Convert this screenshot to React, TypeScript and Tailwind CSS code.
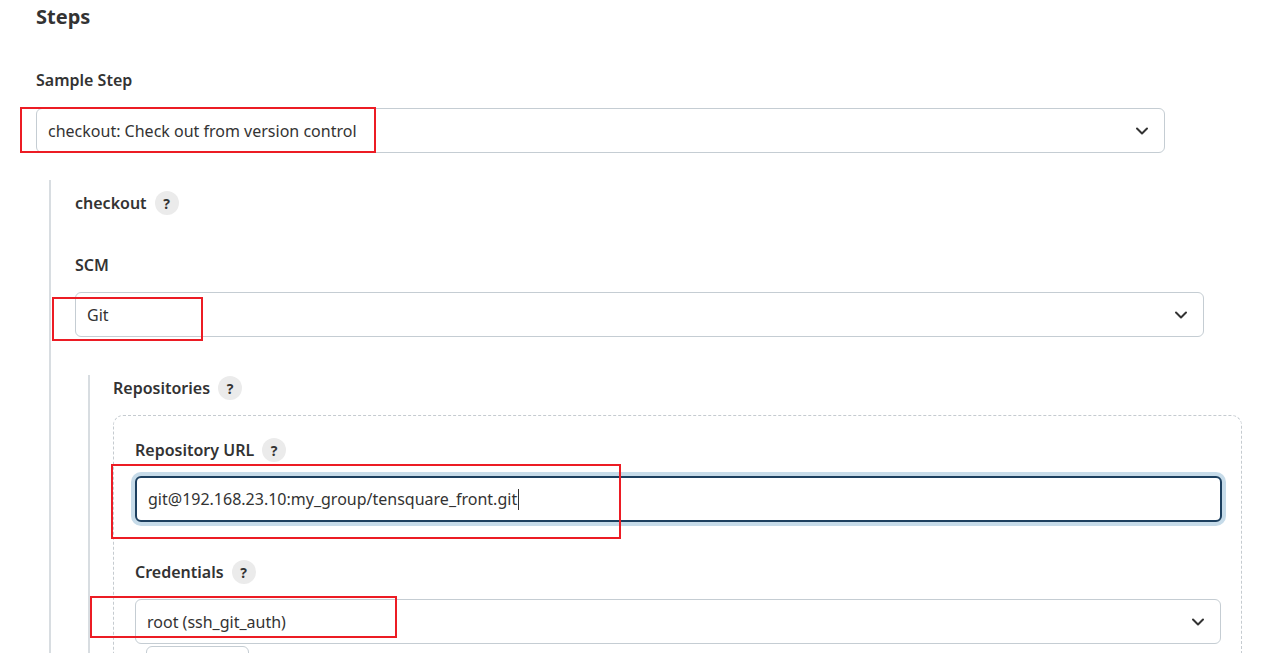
import React from "react";

const Help = () => (
  <span className="ml-[8px] inline-flex h-[24px] w-[24px] items-center justify-center rounded-full bg-[#ebebeb] text-[14px] font-bold text-[#333]">
    ?
  </span>
);

const Chevron = () => (
  <svg width="16" height="16" viewBox="0 0 16 16" fill="none">
    <path d="M3 5.5 L8 10.5 L13 5.5" stroke="#333" strokeWidth="2" strokeLinecap="round" strokeLinejoin="round" />
  </svg>
);

const Select = ({ text, w }: { text: string; w: string }) => (
  <div className={`flex h-[45px] items-center justify-between rounded-[6px] border border-[#c5cdd3] bg-white pl-[11px] pr-[14px] ${w}`}>
    <span className="text-[16px] text-[#333]">{text}</span>
    <Chevron />
  </div>
);

const Label = ({ children, help }: { children: React.ReactNode; help?: boolean }) => (
  <div className="flex h-[24px] items-center text-[16px] font-semibold text-[#333]">
    {children}
    {help && <Help />}
  </div>
);

const Red = ({ l, t, w, h }: { l: number; t: number; w: number; h: number }) => (
  <div
    className="pointer-events-none absolute border-2 border-[#ec1c24]"
    style={{ left: l, top: t, width: w, height: h }}
  />
);

export default function App() {
  return (
    <div
      className="relative h-[653px] w-[1280px] overflow-hidden bg-white pl-[36px] text-[#333]"
      style={{ fontFamily: '"Noto Sans", "Open Sans", sans-serif' }}
    >
      <div className="pt-[3px] text-[20px] font-bold leading-[28px]">Steps</div>
      <div className="mt-[37px]">
        <Label>Sample Step</Label>
      </div>
      <div className="mt-[16px]">
        <Select text="checkout: Check out from version control" w="w-[1129px]" />
      </div>

      <div className="ml-[13px] mt-[27px] border-l-2 border-[#d8dde1] pl-[24px] pt-[11px]">
        <Label help>checkout</Label>
        <div className="mt-[38px]">
          <Label>SCM</Label>
        </div>
        <div className="mt-[15px]">
          <Select text="Git" w="w-[1129px]" />
        </div>

        <div className="ml-[13px] mt-[38px] border-l-2 border-[#d8dde1] pl-[23px]">
          <div className="pt-[1px]">
            <Label help>Repositories</Label>
          </div>
          <div className="mt-[15px] w-[1129px] rounded-t-[10px] border-x border-t border-dashed border-[#c5cbd0] pl-[21px] pt-[22px]">
            <Label help>Repository URL</Label>
            <div className="mt-[14px] flex h-[46px] w-[1087px] items-center rounded-[6px] border-2 border-[#1c3f5f] bg-white pl-[11px] ring-4 ring-[#c6dbe9]">
              <span className="text-[16px] text-[#333]">git@192.168.23.10:my_group/tensquare_front.git</span>
              <span className="ml-[1px] inline-block h-[21px] w-[1px] bg-[#333]" />
            </div>
            <div className="mt-[38px]">
              <Label help>Credentials</Label>
            </div>
            <div className="mt-[15px]">
              <Select text="root (ssh_git_auth)" w="w-[1086px]" />
            </div>
            <div className="ml-[11px] mt-[2px] h-[30px] w-[103px] rounded-[6px] border border-[#c5cdd3]" />
          </div>
        </div>
      </div>

      <Red l={20} t={107} w={356} h={46} />
      <Red l={52} t={297} w={151} h={44} />
      <Red l={111} t={464} w={510} h={75} />
      <Red l={90} t={596} w={307} h={42} />
    </div>
  );
}
